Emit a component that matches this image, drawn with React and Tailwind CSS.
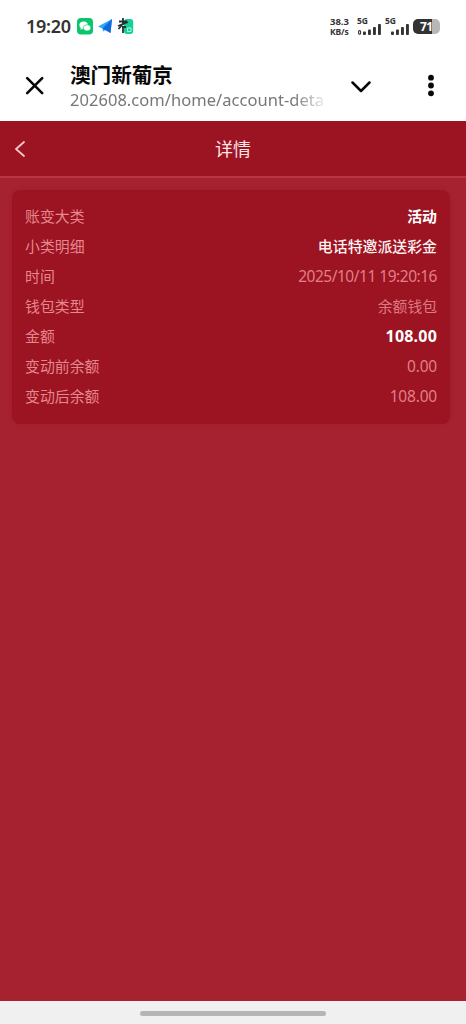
import React from "react";

const rows = [
  { label: "账变大类", value: "活动", tone: "strong" },
  { label: "小类明细", value: "电话特邀派送彩金", tone: "medium" },
  { label: "时间", value: "2025/10/11 19:20:16", tone: "date" },
  { label: "钱包类型", value: "余额钱包", tone: "muted" },
  { label: "金额", value: "108.00", tone: "amount" },
  { label: "变动前余额", value: "0.00", tone: "number" },
  { label: "变动后余额", value: "108.00", tone: "number" },
];

const tones = {
  strong: "font-bold text-white",
  medium: "font-medium text-[#fff0f1] text-[14.9px]",
  date: "text-[#e27f88] text-[15.5px] tracking-[-0.48px]",
  muted: "text-[#dc7983] text-[14.8px]",
  amount: "font-bold text-white text-[16px] tracking-[0.2px]",
  number: "text-[#e27f88] text-[15.5px] tracking-[-0.2px]",
};

function Signal({ small }) {
  return (
    <div className="flex h-[18px] w-[25px] flex-col justify-between">
      <span className="text-[8.5px] leading-[8px] font-bold tracking-[-0.1px]">5G</span>
      <svg className="h-[11px] w-[25px] -mt-[1px]" viewBox="0 0 25 11" fill="#333">
        {small ? <rect x="1.6" y="6.6" width="2" height="3.6" rx="1" fill="none" stroke="#333" strokeWidth="1.1" /> : null}
        <rect x="6" y="7.5" width="2.9" height="3.5" rx=".8" />
        <rect x="11" y="5.5" width="2.9" height="5.5" rx=".8" />
        <rect x="16" y="3" width="2.9" height="8" rx=".8" />
        <rect x="21" y="0" width="2.9" height="11" rx=".8" />
      </svg>
    </div>
  );
}

function StatusBar() {
  return (
    <div className="flex h-[50px] items-center pt-[2px] pl-[26px] pr-[26px] text-[#333]">
      <span className="w-[51px] text-[18px] font-semibold tracking-[-0.3px] whitespace-nowrap">19:20</span>
      <svg className="h-[17px] w-[16px]" viewBox="0 0 16 17">
        <rect width="16" height="16.5" rx="4" fill="#08c66a" />
        <ellipse cx="6.6" cy="7" rx="4.2" ry="3.6" fill="#fff" />
        <path d="M4 9l-.5 3 3-2z" fill="#fff" />
        <ellipse cx="10" cy="9.8" rx="3.8" ry="3.1" fill="#fff" stroke="#08c66a" strokeWidth=".6" />
      </svg>
      <svg className="ml-[5px] h-[16px] w-[15px]" viewBox="0 0 15 16">
        <path d="M0 8.500L14 1 12.500 15 7.500 12 5 13.500 4.500 10.500z" fill="#25a9f7" />
        <path d="M14 1L4.500 10.500 12.500 15z" fill="#1268de" />
      </svg>
      <svg className="ml-[4px] h-[18px] w-[17px]" viewBox="0 0 17 18">
        <rect x="7" y="2" width="9.200" height="15" rx="3" fill="#16cf9c" />
        <path d="M2 4.500h8M6 1v7M1 9l10-4M5 8l-3.500 4M5 10h4M6 9v7" fill="none" stroke="#24332f" strokeWidth="1.8" />
        <path d="M10.500 11h3.500v3.500h-3.500z" fill="none" stroke="#b9ffe5" strokeWidth=".9" />
      </svg>
      <div className="ml-auto flex items-center">
        <div className="flex w-[27px] flex-col">
          <span className="text-[9.5px] leading-[8px] font-bold">38.3</span>
          <span className="mt-[2px] text-[8.5px] leading-[7px] font-bold tracking-[-0.1px]">KB/s</span>
        </div>
        <Signal small />
        <div className="ml-[3px]"><Signal /></div>
        <div className="ml-[3px] flex h-[15px] w-[27px] items-center rounded-[5px] bg-[linear-gradient(to_right,#333_71%,#b7b7b7_71%)] pl-[7px] text-[12px] leading-[15px] font-bold tracking-[-0.5px] text-white">
          71
        </div>
      </div>
    </div>
  );
}

export default function App() {
  return (
    <div className="flex h-[1024px] w-[466px] flex-col overflow-hidden bg-[#a72230] font-['Noto_Sans','Noto_Sans_CJK_SC',sans-serif]">
      <div className="h-[121px] shrink-0 bg-white">
        <StatusBar />
        <div className="flex h-[71px] items-center">
          <svg className="ml-[25px] h-[20px] w-[20px]" viewBox="0 0 20 20" fill="none" stroke="#080808" strokeWidth="2.6" strokeLinecap="round">
            <path d="M2.200 2.200l15 15M17.200 2.200L2.200 17.200" />
          </svg>
          <div className="ml-[25px] w-[254px] pt-[3px]">
            <div className="h-[25px] text-[20.6px] leading-[25px] font-bold whitespace-nowrap text-[#080808]">澳门新葡京</div>
            <div className="h-[24px] overflow-hidden text-[16.5px] leading-[24px] tracking-[0.04px] whitespace-nowrap text-[#777] [mask-image:linear-gradient(to_right,black_88%,transparent_102%)]">
              202608.com/home/account-deta
            </div>
          </div>
          <svg className="mt-[2px] ml-[27px] h-[14px] w-[20px]" viewBox="0 0 20 14" fill="none" stroke="#080808" strokeWidth="2.5" strokeLinecap="round" strokeLinejoin="round">
            <path d="M1.500 2.500L10 11l8.500-8.500" />
          </svg>
          <svg className="ml-[57px] h-[24px] w-[6px]" viewBox="0 0 6 24" fill="#080808">
            <circle cx="3" cy="3.7" r="2.9" /><circle cx="3" cy="11.5" r="2.9" /><circle cx="3" cy="19.3" r="2.9" />
          </svg>
        </div>
      </div>

      <header className="flex h-[57px] shrink-0 items-center border-b-2 border-[#b93441] bg-[#9c1321] text-[#ffe5e6]">
        <svg className="ml-[14px] h-[18px] w-[12px]" viewBox="0 0 12 18" fill="none" stroke="#f4c7ca" strokeWidth="1.8" strokeLinecap="round" strokeLinejoin="round">
          <path d="M10 2L2 9l8 7" />
        </svg>
        <h1 className="flex-1 pr-[26px] text-center text-[18px] leading-[26px]">详情</h1>
      </header>

      <main className="flex-1 pt-3 pr-4 pl-3">
        <section className="h-[234px] rounded-[8px] bg-[#9c1321] px-[13px] py-[11px] shadow-[0_0_4px_rgba(145,15,30,0.25)]">
          {rows.map((row) => (
            <div key={row.label} className="flex h-[30px] items-center justify-between text-[14.9px] leading-[30px] whitespace-nowrap">
              <span className="text-[#e5878f]">{row.label}</span>
              <span className={tones[row.tone]}>{row.value}</span>
            </div>
          ))}
        </section>
      </main>

      <footer className="flex h-[23px] shrink-0 items-center justify-center border-t border-[#faeeee] bg-[#f0f0f0]">
        <div className="h-[5px] w-[186px] rounded-full bg-[#b5b5b5]" />
      </footer>
    </div>
  );
}
